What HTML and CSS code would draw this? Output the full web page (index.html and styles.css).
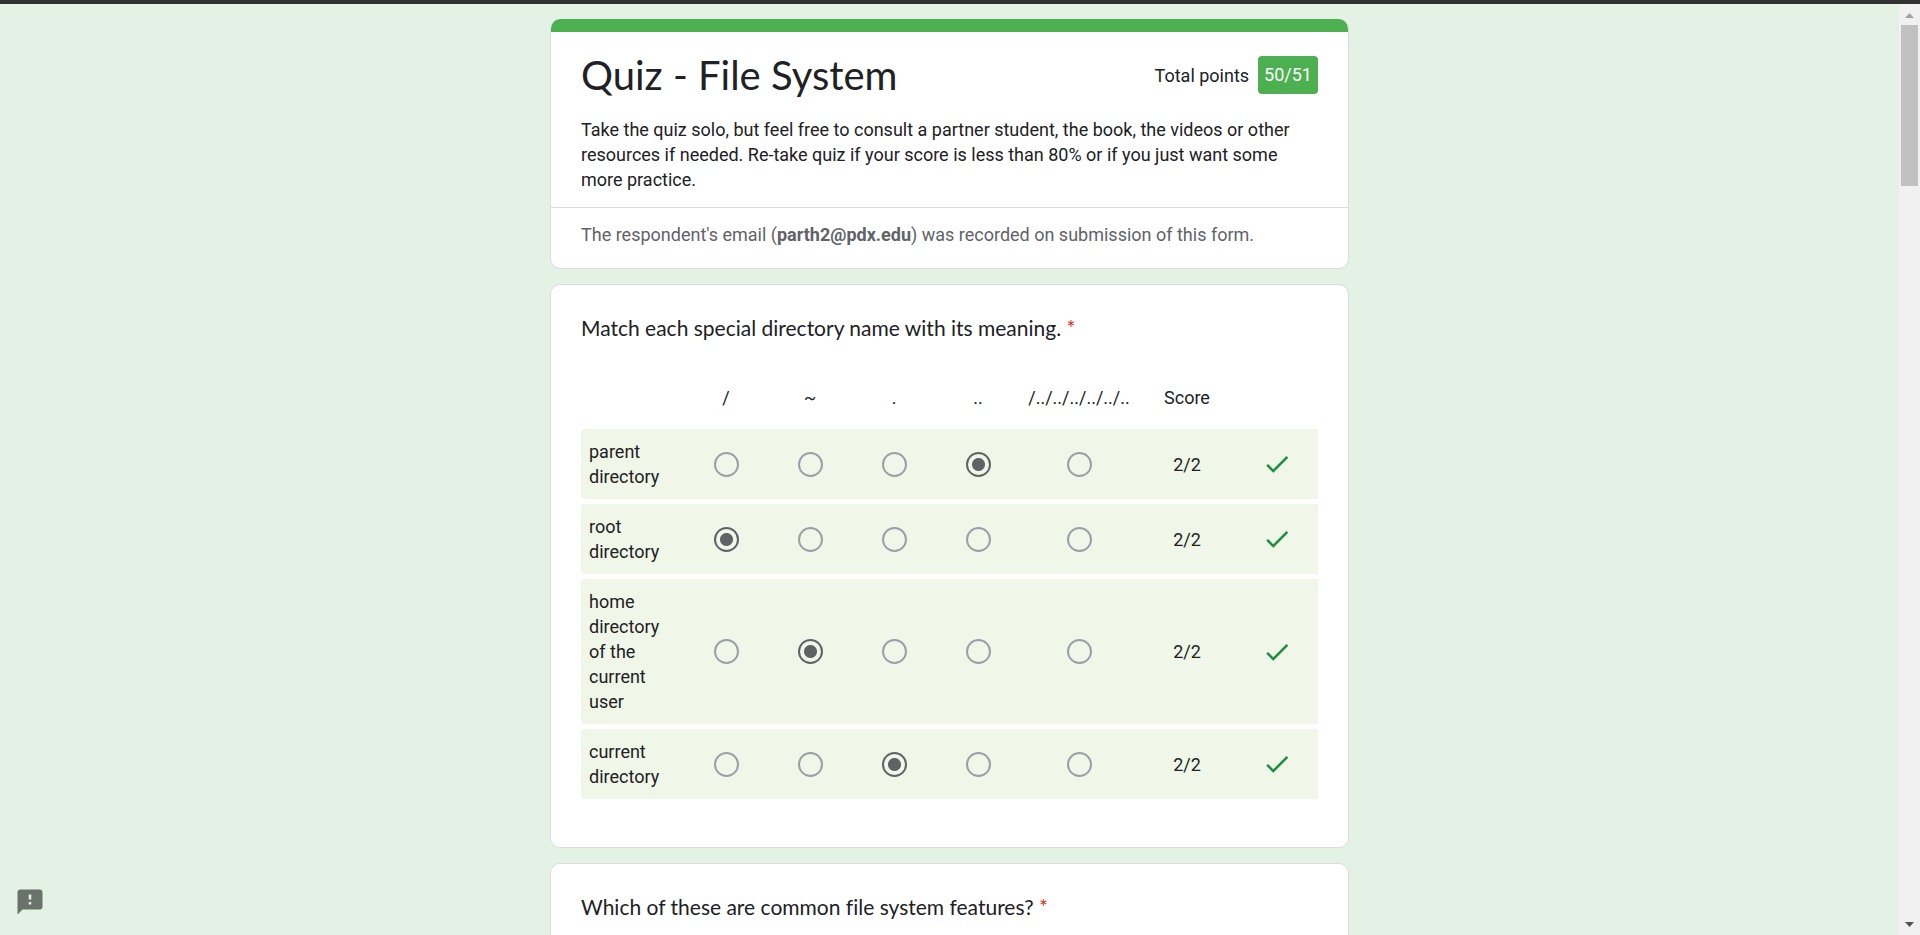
FILE: index.html
```html
<!DOCTYPE html>
<html lang="en">
<head>
<meta charset="utf-8">
<title>Quiz - File System</title>
<link rel="stylesheet" href="styles.css">
</head>
<body>
<svg class="sprite" aria-hidden="true">
  <symbol id="check" viewBox="0 0 24 24"><path d="M9 16.17L4.83 12l-1.42 1.41L9 19 21 7l-1.41-1.41z"/></symbol>
</svg>
<div class="viewport">
  <main class="page">
    <header class="card card-header">
      <div class="card-intro">
        <div class="title-row">
          <h1 class="title">Quiz - File System</h1>
          <p class="points">Total points <span class="badge">50/51</span></p>
        </div>
        <p class="description">Take the quiz solo, but feel free to consult a partner student, the book, the videos or other resources if needed. Re-take quiz if your score is less than 80% or if you just want some more practice.</p>
      </div>
      <p class="respondent">The respondent's email (<strong>parth2@pdx.edu</strong>) was recorded on submission of this form.</p>
    </header>

    <section class="card question">
      <h2 class="question-title">Match each special directory name with its meaning. <span class="required">*</span></h2>
      <table class="grid">
        <colgroup>
          <col><col class="col-option"><col class="col-option"><col class="col-option"><col class="col-option"><col class="col-long"><col class="col-score"><col class="col-mark">
        </colgroup>
        <thead>
          <tr><td></td><th scope="col">/</th><th scope="col">~</th><th scope="col">.</th><th scope="col">..</th><th scope="col">/../../../../../..</th><th scope="col">Score</th><td></td></tr>
        </thead>
        <tbody>
          <tr>
            <th scope="row">parent directory</th>
            <td><input class="radio" type="radio" name="parent" aria-label="parent directory: /"></td>
            <td><input class="radio" type="radio" name="parent" aria-label="parent directory: ~"></td>
            <td><input class="radio" type="radio" name="parent" aria-label="parent directory: ."></td>
            <td><input class="radio" type="radio" name="parent" aria-label="parent directory: .." checked></td>
            <td><input class="radio" type="radio" name="parent" aria-label="parent directory: /../../../../../.."></td>
            <td>2/2</td>
            <td><svg class="mark" role="img" aria-label="Correct"><use href="#check"/></svg></td>
          </tr>
          <tr>
            <th scope="row">root directory</th>
            <td><input class="radio" type="radio" name="root" aria-label="root directory: /" checked></td>
            <td><input class="radio" type="radio" name="root" aria-label="root directory: ~"></td>
            <td><input class="radio" type="radio" name="root" aria-label="root directory: ."></td>
            <td><input class="radio" type="radio" name="root" aria-label="root directory: .."></td>
            <td><input class="radio" type="radio" name="root" aria-label="root directory: /../../../../../.."></td>
            <td>2/2</td>
            <td><svg class="mark" role="img" aria-label="Correct"><use href="#check"/></svg></td>
          </tr>
          <tr>
            <th scope="row">home directory of the current user</th>
            <td><input class="radio" type="radio" name="home" aria-label="home directory of the current user: /"></td>
            <td><input class="radio" type="radio" name="home" aria-label="home directory of the current user: ~" checked></td>
            <td><input class="radio" type="radio" name="home" aria-label="home directory of the current user: ."></td>
            <td><input class="radio" type="radio" name="home" aria-label="home directory of the current user: .."></td>
            <td><input class="radio" type="radio" name="home" aria-label="home directory of the current user: /../../../../../.."></td>
            <td>2/2</td>
            <td><svg class="mark" role="img" aria-label="Correct"><use href="#check"/></svg></td>
          </tr>
          <tr>
            <th scope="row">current directory</th>
            <td><input class="radio" type="radio" name="current" aria-label="current directory: /"></td>
            <td><input class="radio" type="radio" name="current" aria-label="current directory: ~"></td>
            <td><input class="radio" type="radio" name="current" aria-label="current directory: ." checked></td>
            <td><input class="radio" type="radio" name="current" aria-label="current directory: .."></td>
            <td><input class="radio" type="radio" name="current" aria-label="current directory: /../../../../../.."></td>
            <td>2/2</td>
            <td><svg class="mark" role="img" aria-label="Correct"><use href="#check"/></svg></td>
          </tr>
        </tbody>
      </table>
    </section>

    <section class="card question">
      <h2 class="question-title">Which of these are common file system features? <span class="required">*</span></h2>
    </section>
  </main>
  <div class="scrollbar" aria-hidden="true">
    <svg class="arrow" viewBox="0 0 21 21"><path fill="#a3a3a3" d="M6 14l4.500-5L15 14z"/></svg>
    <div class="thumb"></div>
    <svg class="arrow arrow-down" viewBox="0 0 21 21"><path fill="#505050" d="M6 8l4.500 5L15 8z"/></svg>
  </div>
</div>
<button class="feedback" type="button" aria-label="Report a problem">
  <svg class="feedback-icon" viewBox="0 0 24 24"><path d="M20 2H4c-1.100 0-1.990.9-1.990 2L2 22l4-4h14c1.100 0 2-.9 2-2V4c0-1.100-.9-2-2-2zm-7 12h-2v-2h2v2zm0-4h-2V6h2v4z"/></svg>
</button>
</body>
</html>
```
FILE: styles.css
```css
* { box-sizing: border-box; }

body {
  margin: 0;
  background: #e4f2e5;
  color: #202124;
  font: 18px/25px Roboto, "Liberation Sans", sans-serif;
}

h1, h2, p { margin: 0; font-weight: 400; }

.sprite { display: none; }

.viewport {
  display: flex;
  height: 100vh;
  overflow: hidden;
  border-top: 4px solid #323232;
}

.page {
  flex: 1;
  min-width: 0;
  display: flex;
  flex-direction: column;
  align-items: center;
  gap: 15px;
  padding: 15px 0;
}

.card {
  flex: none;
  width: 100%;
  max-width: 799px;
  background: #fff;
  border: 1px solid #dadce0;
  border-radius: 10px;
}

.card-header {
  border-top: 0;
  background: linear-gradient(#4caf50 13px, #fff 13px) border-box;
}

.card-intro {
  padding: 29px 30px 15px;
  border-bottom: 1px solid #dadce0;
}

.title-row {
  display: flex;
  align-items: center;
  justify-content: space-between;
  margin-bottom: 15px;
}

.title {
  font: 40px/54px Lato, "Liberation Sans", sans-serif;
}

.points {
  display: flex;
  align-items: center;
  gap: 9px;
}

.badge {
  padding: 6px 6px 7px;
  border-radius: 4px;
  background: #4caf50;
  color: #fff;
}

.respondent {
  padding: 14px 30px 21px;
  color: #5f6368;
}

.question { padding: 28px 30px 43px; }

.question-title {
  font: 21px/30px Lato, "Liberation Sans", sans-serif;
  font-variant-ligatures: none;
}

.required { color: #d93025; }

.grid {
  width: 100%;
  margin-top: 23px;
  table-layout: fixed;
  border-spacing: 0 5px;
  text-align: center;
}

.col-option { width: 84px; }
.col-long { width: 118px; }
.col-score { width: 98px; }
.col-mark { width: 82px; }

.grid th, .grid td {
  padding: 10px 0;
  font-weight: 400;
  vertical-align: middle;
}

.grid thead th { padding: 14px 0; }

.grid tbody tr { background: #f0f6e8; }

.grid tbody th {
  padding-left: 8px;
  padding-right: 16px;
  border-radius: 4px 0 0 4px;
  text-align: left;
}

.radio {
  appearance: none;
  display: block;
  width: 25px;
  height: 25px;
  margin: 0 auto;
  border: 2px solid #9aa0a6;
  border-radius: 50%;
}

.radio:checked {
  border-color: #5f6368;
  background: radial-gradient(circle, #5f6368 6px, transparent 7px);
}

.mark {
  display: block;
  width: 30px;
  height: 30px;
  margin: 0 auto;
  fill: #1e8e3e;
}

.scrollbar {
  flex: none;
  width: 21px;
  display: flex;
  flex-direction: column;
  background: #f1f1f1;
}

.arrow {
  flex: none;
  width: 21px;
  height: 21px;
}

.arrow-down { margin-top: auto; }

.thumb {
  height: 161px;
  margin: 0 2px;
  background: #c1c1c1;
}

.feedback {
  position: fixed;
  left: 15px;
  bottom: 18px;
  padding: 0;
  border: 0;
  background: none;
}

.feedback-icon {
  display: block;
  width: 30px;
  height: 30px;
  fill: #6a736b;
}
```
